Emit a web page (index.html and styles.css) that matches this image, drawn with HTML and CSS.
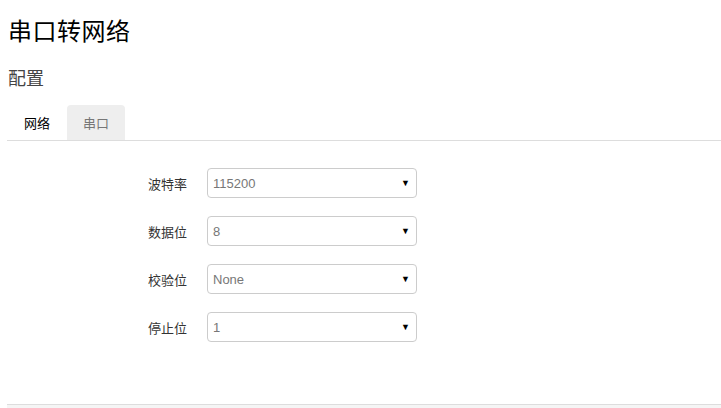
FILE: index.html
```html
<!DOCTYPE html>
<html lang="zh-CN">
<head>
<meta charset="utf-8">
<title>串口转网络</title>
<link rel="stylesheet" href="styles.css">
</head>
<body>
<div class="page">
  <h2 class="title">串口转网络</h2>
  <h3 class="subtitle">配置</h3>
  <ul class="tabs">
    <li class="tab active">网络</li>
    <li class="tab second">串口</li>
  </ul>
  <div class="form">
    <div class="row">
      <label class="label">波特率</label>
      <div class="select"><span class="value">115200</span><span class="arrow">▼</span></div>
    </div>
    <div class="row">
      <label class="label">数据位</label>
      <div class="select"><span class="value">8</span><span class="arrow">▼</span></div>
    </div>
    <div class="row">
      <label class="label">校验位</label>
      <div class="select"><span class="value">None</span><span class="arrow">▼</span></div>
    </div>
    <div class="row">
      <label class="label">停止位</label>
      <div class="select"><span class="value">1</span><span class="arrow">▼</span></div>
    </div>
  </div>
  <div class="footer"></div>
</div>
</body>
</html>
```
FILE: styles.css
```css
html, body {
  margin: 0;
  padding: 0;
  background: #fff;
}
body {
  font-family: "Liberation Sans", Arial, "Noto Sans CJK SC", sans-serif;
  color: #333;
}
.page {
  padding: 16px 0 0 7px;
  overflow: hidden;
  height: 392px;
}
.title {
  margin: 0 0 0 1px;
  font-family: "Noto Sans CJK SC", sans-serif;
  font-size: 24px;
  font-weight: 400;
  line-height: 28px;
  color: #000;
  letter-spacing: 0.5px;
}
.subtitle {
  margin: 21px 0 0 1px;
  font-family: "Noto Sans CJK SC", sans-serif;
  font-size: 18px;
  font-weight: 400;
  line-height: 24px;
  color: #444;
}
.tabs {
  list-style: none;
  margin: 16px 0 0 0;
  padding: 0;
  display: flex;
  border-bottom: 1px solid #ddd;
}
.tab {
  width: 60px;
  height: 35px;
  box-sizing: border-box;
  display: flex;
  align-items: center;
  justify-content: center;
  font-family: "Noto Sans CJK SC", sans-serif;
  font-size: 13px;
  color: #777;
  background: #eee;
  border-radius: 4px 4px 0 0;
}
.tab.second {
  width: 58px;
}
.tab.active {
  background: #fff;
  color: #000;
}
.form {
  display: flex;
  flex-direction: column;
  gap: 18px;
  margin-top: 27px;
}
.row {
  display: grid;
  grid-template-columns: 180px 210px;
  column-gap: 20px;
  align-items: center;
}
.label {
  text-align: right;
  font-family: "Noto Sans CJK SC", sans-serif;
  font-size: 13px;
  color: #333;
}
.select {
  height: 30px;
  box-sizing: border-box;
  border: 1px solid #ccc;
  border-radius: 4px;
  display: flex;
  align-items: center;
  justify-content: space-between;
  padding: 0 6px 0 5px;
  font-size: 13px;
  color: #777;
}
.arrow {
  font-size: 9px;
  color: #000;
}
.footer {
  margin-top: 62px;
  border-top: 1px solid #ddd;
  background: #f5f5f5;
  height: 20px;
}
```
